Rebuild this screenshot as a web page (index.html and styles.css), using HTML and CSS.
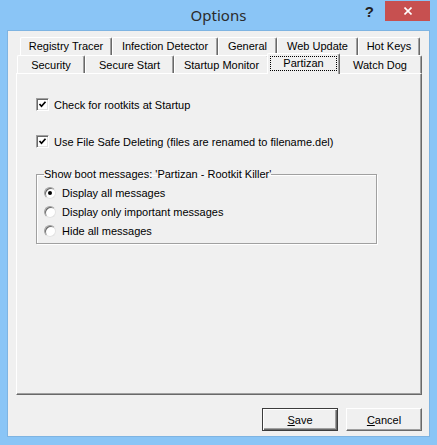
FILE: index.html
```html
<!DOCTYPE html>
<html lang="en">
<head>
<meta charset="UTF-8" />
<title>Options</title>
<link rel="stylesheet" href="styles.css">
</head>
<body>
<div class="window">
  <div class="titlebar">
    <span></span>
    <span class="title">Options</span>
    <div class="controls">
      <span class="help">?</span>
      <span class="close">
        <svg width="8" height="8" viewBox="0 0 8 8"><path d="M0.5 0.5 L7.5 7.5 M7.5 0.5 L0.5 7.5" stroke="#fff" stroke-width="1.6" /></svg>
      </span>
    </div>
  </div>

  <div class="client">
    <div class="tab-row back">
      <div class="tab tab-registry">Registry Tracer</div>
      <div class="tab tab-infection">Infection Detector</div>
      <div class="tab tab-general">General</div>
      <div class="tab tab-web">Web Update</div>
      <div class="tab tab-hotkeys">Hot Keys</div>
    </div>
    <div class="tab-row front">
      <div class="tab tab-security">Security</div>
      <div class="tab tab-secure">Secure Start</div>
      <div class="tab tab-startup">Startup Monitor</div>
      <div class="tab tab-partizan selected"><span class="focus">Partizan</span></div>
      <div class="tab tab-watchdog">Watch Dog</div>
    </div>

    <div class="panel">
      <div class="check-row">
        <span class="checkbox"><svg width="9" height="9" viewBox="0 0 9 9"><path d="M1.5 4 L3.5 6.2 L7.5 1.8" fill="none" stroke="#000" stroke-width="1.7" /></svg></span>
        Check for rootkits at Startup
      </div>
      <div class="check-row second">
        <span class="checkbox"><svg width="9" height="9" viewBox="0 0 9 9"><path d="M1.5 4 L3.5 6.2 L7.5 1.8" fill="none" stroke="#000" stroke-width="1.7" /></svg></span>
        Use File Safe Deleting (files are renamed to filename.del)
      </div>

      <fieldset class="group">
        <legend>Show boot messages: 'Partizan - Rootkit Killer'</legend>
        <div class="radio-row"><span class="radio"><span class="dot"></span></span>Display all messages</div>
        <div class="radio-row"><span class="radio"></span>Display only important messages</div>
        <div class="radio-row"><span class="radio"></span>Hide all messages</div>
      </fieldset>
    </div>

    <div class="buttons">
      <button class="btn default"><u>S</u>ave</button>
      <button class="btn"><u>C</u>ancel</button>
    </div>
  </div>
</div>
</body>
</html>
```

FILE: styles.css
```css
* {
  margin: 0;
  padding: 0;
  box-sizing: border-box;
}
body {
  background: #8ac5f6;
  font-family: 'Liberation Sans', Arial, sans-serif;
  font-size: 11px;
  color: #000;
}
.window {
  width: 437px;
  height: 445px;
  display: flex;
  flex-direction: column;
}

/* title bar */
.titlebar {
  height: 30px;
  display: grid;
  grid-template-columns: 1fr auto 1fr;
}
.title {
  font-family: 'Noto Sans', sans-serif;
  font-size: 15px;
  line-height: 30px;
  color: #2b2b2b;
}
.controls {
  justify-self: end;
  display: flex;
  align-items: flex-start;
  margin-right: 7px;
}
.help {
  font-weight: bold;
  font-size: 15px;
  line-height: 16px;
  margin-top: 4px;
  margin-right: 11px;
  color: #222;
}
.close {
  width: 45px;
  height: 20px;
  margin-top: 1px;
  background: #c75050;
  display: flex;
  justify-content: center;
  align-items: center;
}

/* client area */
.client {
  margin: 0 7px;
  height: 407px;
  background: #f0f0f0;
  border: 1px solid #7eb4e2;
  padding: 6px 7px 0 8px;
}
.tab-row {
  display: flex;
  height: 18px;
}
.tab-row.back {
  margin-left: 4px;
}
.tab-row.front {
  margin-left: 1px;
}
.tab {
  height: 18px;
  border-top: 1px solid #fff;
  border-left: 1px solid #fff;
  border-right: 1px solid #696969;
  border-radius: 2px 2px 0 0;
  box-shadow: inset -1px 0 #a0a0a0;
  text-align: center;
  line-height: 17px;
  white-space: nowrap;
}
.front .tab {
  line-height: 18px;
}
.tab-registry { width: 92px; }
.tab-infection { width: 106px; }
.tab-general { width: 59px; }
.tab-web { width: 81px; }
.tab-hotkeys { width: 62px; }
.tab-security { width: 68px; }
.tab-secure { width: 89px; }
.tab-startup { width: 95px; }
.tab-partizan { width: 69px; }
.tab-watchdog { width: 84px; }

.tab.selected {
  width: 73px;
  height: 21px;
  margin: -2px -2px 0 -2px;
  background: #f0f0f0;
  position: relative;
  z-index: 1;
  line-height: 13px;
}
.focus {
  display: inline-block;
  margin-top: 2px;
  padding: 0 12px;
  height: 15px;
  border: 1px dotted #000;
}

.panel {
  height: 322px;
  border: 1px solid;
  border-color: #fff #696969 #696969 #fff;
  box-shadow: inset -1px -1px #a0a0a0;
  padding: 24px 0 0 19px;
}
.check-row {
  display: flex;
  align-items: center;
  height: 13px;
  white-space: nowrap;
}
.check-row.second {
  margin-top: 24px;
}
.checkbox {
  width: 13px;
  height: 13px;
  margin-right: 5px;
  background: #fff;
  border: 1px solid;
  border-color: #a0a0a0 #fff #fff #a0a0a0;
  box-shadow: inset 1px 1px #696969, inset -1px -1px #e3e3e3;
  display: flex;
  justify-content: center;
  align-items: center;
}
.checkbox svg {
  display: block;
}

.group {
  width: 341px;
  margin-top: 20px;
  border: 1px solid #a0a0a0;
  box-shadow: inset 1px 1px #fff, 1px 1px #fff;
  padding: 2px 0 3px 7px;
}
.group legend {
  line-height: 13px;
  padding: 0;
}
.radio-row {
  display: flex;
  align-items: center;
  height: 19px;
}
.radio {
  width: 12px;
  height: 12px;
  margin-right: 6px;
  border-radius: 50%;
  background: #fff;
  border: 1px solid;
  border-color: #a0a0a0 #e3e3e3 #e3e3e3 #a0a0a0;
  box-shadow: inset 1px 1px #696969;
  display: flex;
  justify-content: center;
  align-items: center;
}
.dot {
  width: 4px;
  height: 4px;
  border-radius: 50%;
  background: #000;
}

.buttons {
  display: flex;
  justify-content: flex-end;
  gap: 8px;
  margin-top: 13px;
}
.btn {
  width: 76px;
  height: 23px;
  font-family: 'Liberation Sans', Arial, sans-serif;
  font-size: 11px;
  color: #000;
  background: #f0f0f0;
  border: 1px solid;
  border-color: #fff #696969 #696969 #fff;
  box-shadow: inset -1px -1px #a0a0a0;
}
.btn.default {
  border: 1px solid #3c3c3c;
  box-shadow: inset 1px 1px #fff, inset -1px -1px #696969, inset -2px -2px #a0a0a0;
}
```
